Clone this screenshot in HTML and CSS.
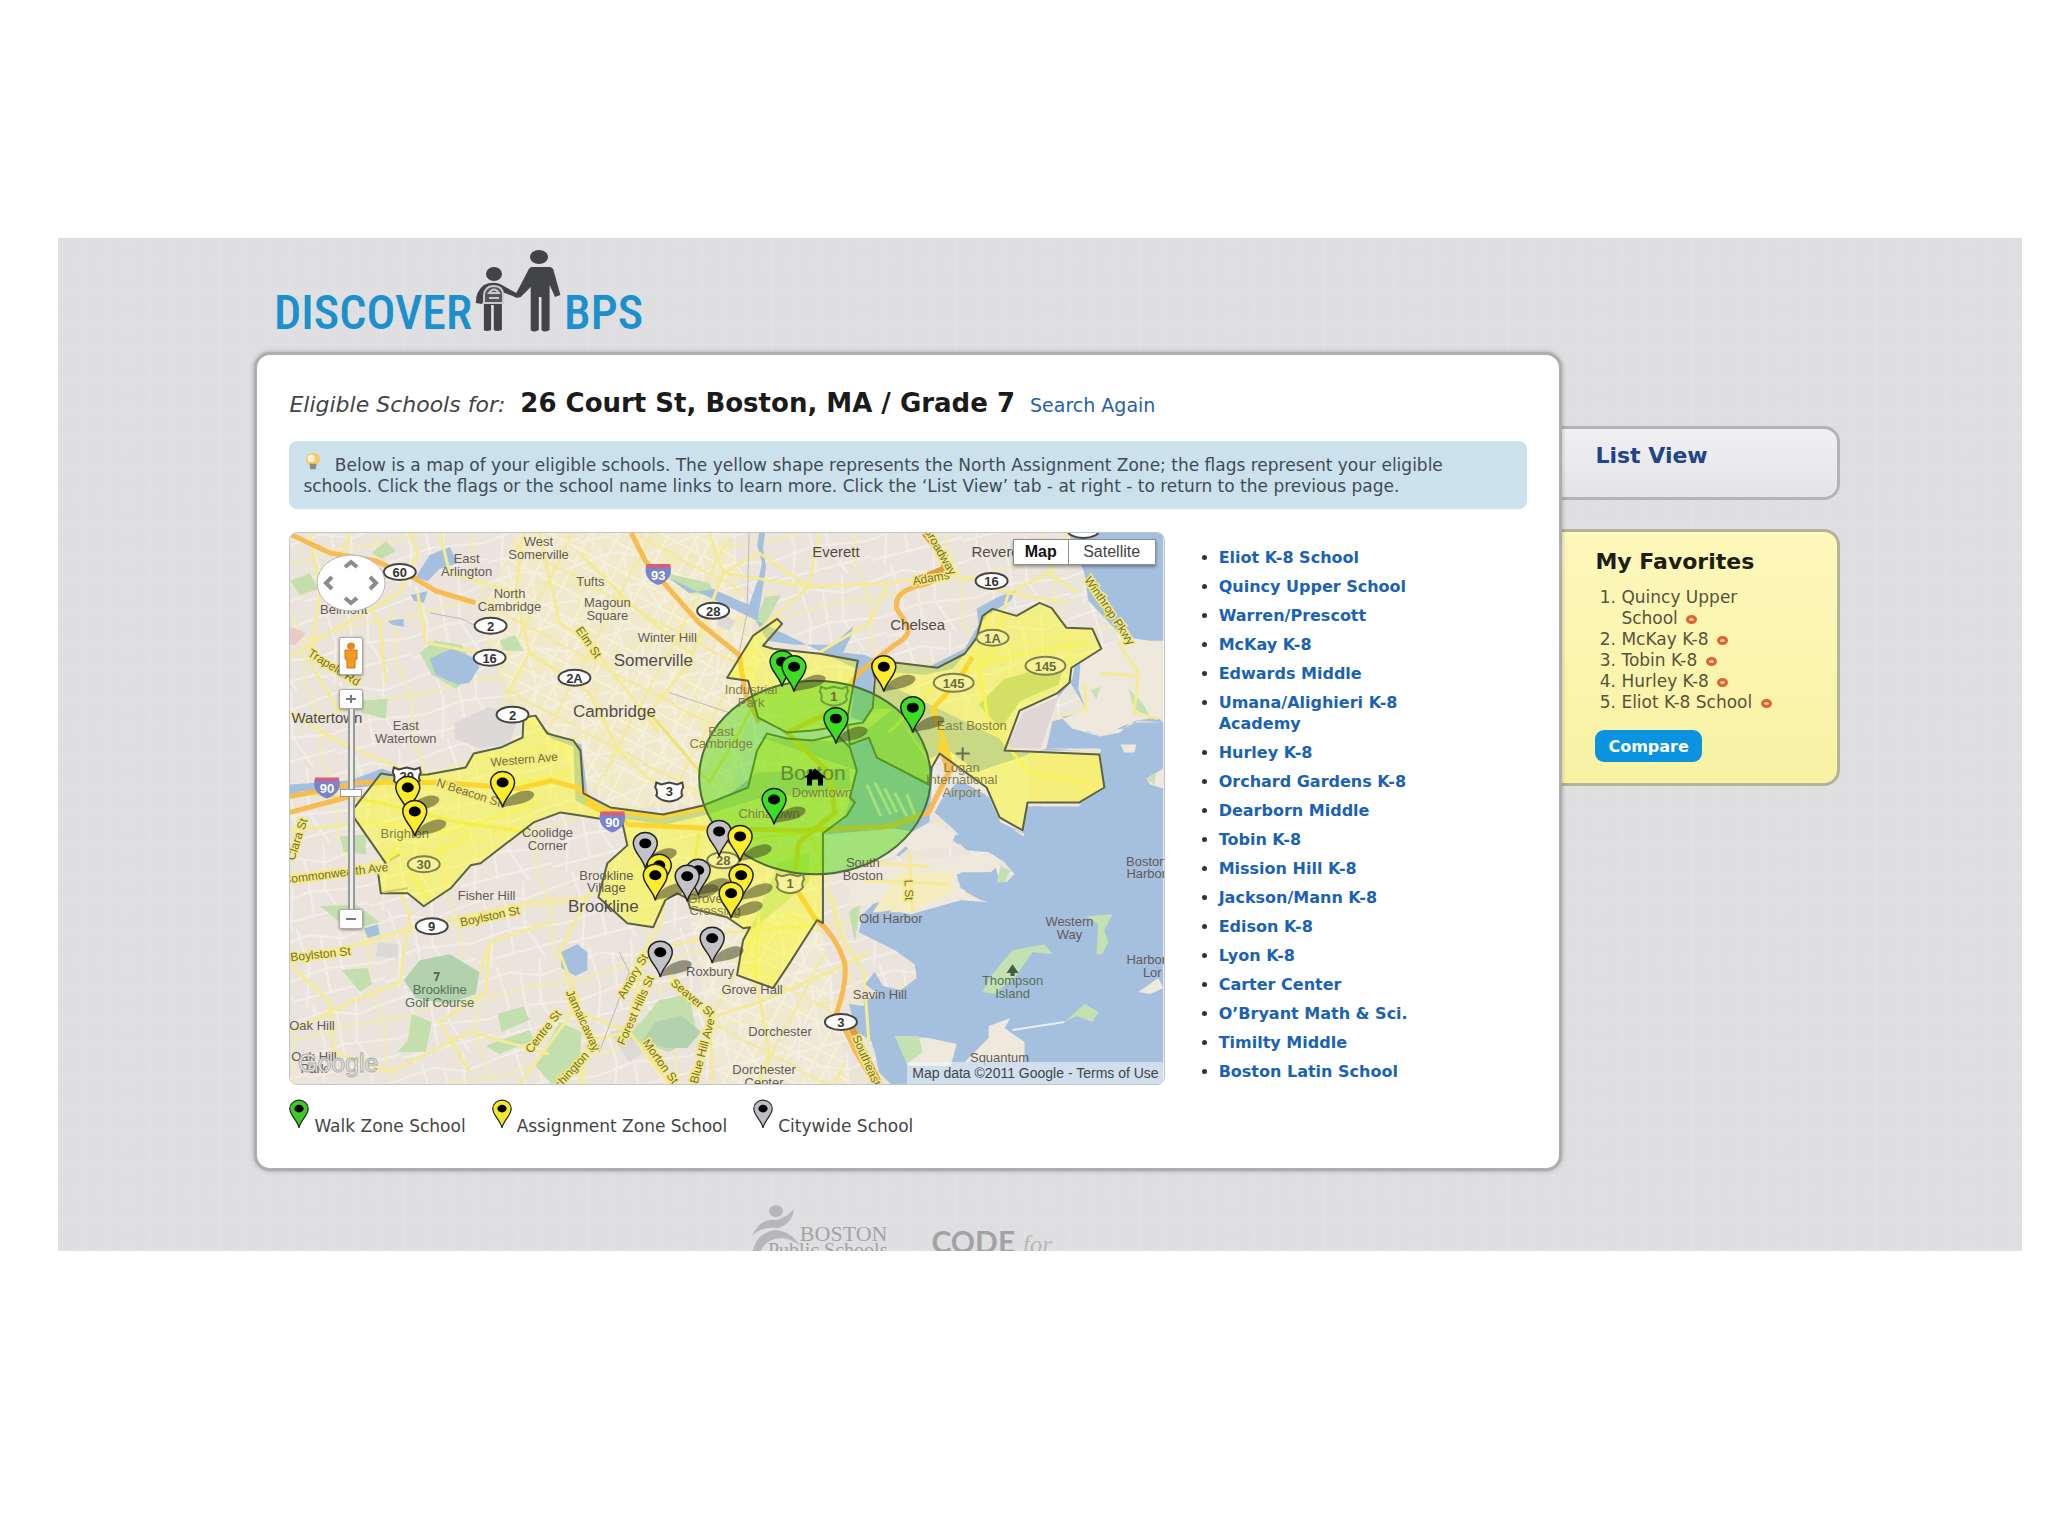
FILE: index.html
```html
<!DOCTYPE html>
<html lang="en">
<head>
<meta charset="utf-8">
<title>Discover BPS</title>
<link rel="stylesheet" href="styles.css">
</head>
<body>
<div class="page">
  <header class="site-header">
    <a class="logo" href="#" aria-label="Discover BPS">
      <span>DISCOVER</span>
      <svg class="logo-people" viewBox="0 0 88 84" aria-hidden="true">
        <g fill="#434447">
          <ellipse cx="20" cy="25" rx="8" ry="7"/>
          <path d="M11 36Q20 32 29 35L47 44L61 20Q62 18 65 18H85L88 20L96 46L90 48L84 36V81Q78 84 75 81V48H72V81Q66 84 63 81V38L52 48Q47 50 43 47L31 43V81Q25 83 22 81V56H19V81Q13 83 11 81V50L9 55L2 54Q2 42 11 36Z" transform="scale(.9 1)"/>
          <ellipse cx="65" cy="8" rx="9" ry="7"/>
        </g>
        <path d="M10 54V46Q11 37 20 37T29 46V54ZM15 49H25M15 44Q20 37 25 44Z" fill="#55565a" stroke="#c9c9cb" stroke-width="2"/>
      </svg>
      <span>BPS</span>
    </a>
  </header>

  <div class="columns">
    <main class="card">
      <div class="title-row">
        <em>Eligible Schools for:</em>
        <h1>26 Court St, Boston, MA / Grade 7</h1>
        <a href="#">Search Again</a>
      </div>
      <p class="tip"><svg class="bulb" viewBox="0 0 18 20" aria-hidden="true"><ellipse cx="9" cy="7" rx="8" ry="7" fill="#f6c969"/><ellipse cx="7" cy="6" rx="4" ry="4" fill="#fff2cf"/><path d="M5 12H13L12 18H6Z" fill="#8f8a80"/></svg> Below is a map of your eligible schools. The yellow shape represents the North Assignment Zone; the flags represent your eligible schools. Click the flags or the school name links to learn more. Click the ‘List View’ tab - at right - to return to the previous page.</p>

      <div class="content">
        <section class="map-column">
          <div class="map">
            <svg class="map-canvas" viewBox="0 0 875 552" role="img" aria-label="Map of eligible schools">
              <defs>
                <pattern id="streets" width="94" height="78" patternUnits="userSpaceOnUse" patternTransform="rotate(-12)">
                  <path d="M0 12L30 8L60 18L94 12M0 50L40 44L94 50M18 0L22 40L12 78M62 0L54 44L68 78M0 70L94 66M40 10L38 70" fill="none" stroke="#f3efe8" stroke-width="2"/>
                  <path d="M0 30L48 26L94 30M80 0L84 34L76 78" fill="none" stroke="#f3ecac" stroke-width="2"/>
                </pattern>
                <pattern id="streets-dense" width="70" height="66" patternUnits="userSpaceOnUse" patternTransform="rotate(28)">
                  <path d="M0 10H70M0 24H70M0 52H70M12 0V66M26 0V66M56 0V66" fill="none" stroke="#f5f0d8" stroke-width="2"/>
                  <path d="M0 38L70 36M40 0L42 66" fill="none" stroke="#f4ea94" stroke-width="2"/>
                </pattern>
                <g id="pin">
                  <path d="M0 0C-2-10-12-16-12-25A12 11 0 0 1 12-25C12-16 2-10 0 0Z" stroke="#222" stroke-width="1.5"/>
                  <ellipse cx="0" cy="-25" rx="6" ry="5" fill="#000"/>
                </g>
                <path id="shade" d="M0 0C2-9 14-17 25-17C36-16 32-8 22-5C14-2 6-2 0 0Z" fill="#3c3c20" opacity=".5"/>
                <ellipse id="oval" rx="16" ry="8" stroke-width="2"/>
                <path id="us" d="M-13-9L-8-7L0-9L8-7L13-9L14-4Q11 0 13 4Q10 9 0 10Q-10 9-13 4Q-11 0-14-4Z" stroke-width="2"/>
                <g id="interstate"><path d="M-12-9H12Q14-2 11 3Q7 9 0 11Q-7 9-11 3Q-14-2-12-9Z" fill="#7784cf"/><path d="M-12-10H12V-6H-12Z" fill="#d6607a"/></g>
              </defs>
              <rect width="875" height="552" fill="#eae4dc"/>
              <path d="M225 0H440L470 130L440 270L320 275L230 180L190 90Z" fill="#f1e9cb"/>
              <path d="M400 380H530L560 552H430Z" fill="#efe8d5"/>
              <rect width="875" height="552" fill="url(#streets)"/>
              <path d="M225 0H440L470 130L440 270L320 275L230 180L190 90ZM400 380H530L560 552H430Z" fill="url(#streets-dense)"/>

              <g fill="#ddd9d8">
                <path d="M165 190L200 174L228 186L220 212L190 216L165 206ZM320 500L352 490L368 510L340 530ZM88 410L108 412V426L86 424ZM430 80L446 88L440 98L428 92Z"/>
              </g>
              <g fill="#c3dfae">
                <path d="M82 20L96 8L106 18L92 26ZM0 48L20 40L28 56L10 62ZM130 120L145 108L172 112L186 140L166 156L142 142ZM210 108L225 102L234 118L214 118ZM70 168L98 166L96 186L72 180ZM30 374L66 372L90 390L60 398ZM50 304L76 302V322L54 320ZM118 508L122 482L142 490L136 520L108 520ZM52 438L78 436L82 452L70 460ZM208 482L234 474L240 488L212 500ZM196 514L240 498L244 508L210 522ZM246 534L270 490L292 500L290 540L262 552ZM338 506L370 468L400 462L408 504L380 520ZM460 400L490 330L520 320V350ZM560 380L572 370L566 410ZM376 40L420 50L426 62L400 60ZM466 90L476 64L492 62L476 92Z"/>
                <path d="M114 448L130 428L160 422L190 440L186 462L158 472L126 466Z" fill="#b2d1ad"/>
                <path d="M354 508L366 490L392 484L412 500L398 516L376 516Z" fill="#b2d1ad"/>
              </g>
              <path d="M0 94L16 100L6 112L0 112Z" fill="#ecc9c9"/>

              <g fill="#a5bfde">
                <path d="M126 44L140 22L160 14L168 30L150 36L138 48ZM121 62L138 58L134 70L124 68ZM98 88L114 86V94L102 92ZM140 126L162 116L182 124L190 134L180 150L168 152L146 142ZM74 396L88 392L90 402L78 406ZM271 420L288 412L298 420V438L286 444L272 436Z"/>
                <path d="M0 252L60 248L92 236L108 242L96 252L60 256L0 262ZM250 194L268 204L292 212L298 262L322 276L372 284L414 274L440 262L468 240L560 236L562 256L470 266L418 282L376 292L318 284L286 268L284 214L262 206Z"/>
                <path d="M378 44L400 60L424 56L450 68L460 72L470 44L473 30L468 12L470 0H476L474 16L477 34L472 66L468 90L478 108L506 112L544 112L564 94L562 104L554 120L575 122L590 128L640 134L676 116L690 92L688 76L706 66L728 56L722 68L706 78L694 88L686 110L664 136L636 142L586 138L586 176L604 176L640 226L660 218L690 240L700 268L712 292L738 302L756 268L794 272L820 256L816 220L760 216L750 208L768 160L784 146L786 134L812 118L826 116L838 108L800 68L796 40L780 0H875V108H846L834 106L852 170L875 190L842 190L832 200L812 204L784 196L774 184L800 180L782 150L770 164L755 180L746 216H812L818 256L790 274H742L735 304L710 288L692 252L668 250L652 268L646 280L664 296L670 302L620 312H672L678 318L700 320L716 330L726 342L718 350L710 346L704 324L680 330L668 346L678 360L696 370L670 362L640 374L622 382L602 378L588 368L574 382L570 400L586 408L606 418L626 432L628 446L612 458L594 454L586 440L576 452L590 462L574 474L560 472L568 500L584 510L590 540L602 552H875V190L850 188L836 196L800 200L786 190L774 186L760 190L740 220Z"/>
                <path d="M568 130L584 134V176L576 190L562 184Z"/>
                <path d="M470 204L562 210L604 176L644 236L640 300L610 324L570 308L536 302L556 286L568 238Z"/>
                <path d="M575 470H620L680 500L640 552H608L584 515Z"/>
              </g>
              <path d="M566 268L590 240L644 236L636 298L604 326L540 340L548 300Z" fill="#a5bfde"/>
              <path d="M536 302L604 296L632 300L604 326L540 340Z" fill="#eee9dd"/>
              <path d="M578 252L592 284M586 250L602 282M596 256L608 280M606 260L618 284M618 262L626 282" fill="none" stroke="#eee9dd" stroke-width="3"/>
              <g fill="#eee9dc">
                <path d="M792 130L834 104L875 110V184L848 188L816 202L784 196L774 186L798 178L790 156Z"/>
                <path d="M832 212L848 212L846 220H836ZM858 246L875 236V256L862 252ZM850 460L870 446L875 456L862 462ZM700 494L722 486L716 496L736 510V530H676L700 506ZM606 504L640 506L668 512L662 534H620Z"/>
                <path d="M668 246L700 264L712 290L734 300L738 274L790 272L816 256L812 222L716 218L740 178L770 160L758 216Z"/>
                <path d="M612 306L640 290L668 300L664 308L672 314L620 318ZM560 332L704 322L714 330L702 340L668 340L672 362L700 370L672 368L622 382L590 370L560 376Z"/>
              </g>
              <path d="M770 164L752 216H718L734 180Z" fill="#e0d6d6"/>
              <path d="M740 218H811L816 255L791 270H742Z" fill="#eee4cc"/>
              <path d="M584 380L610 340L664 340L664 360L622 380Z" fill="#f5ecc0"/>
              <path d="M668 342L702 340L708 356L694 366L672 356Z" fill="#a5bfde"/>
              <g fill="#c3e1b2">
                <path d="M702 444L724 418L756 412L764 422L744 420L726 446L706 462L694 460ZM798 384L824 382L816 398L820 410L814 422H808L810 392ZM776 490L796 472L810 480L804 490L788 484ZM606 504L630 504L634 520L618 532ZM712 334L722 338L716 350H708ZM840 156L854 170L864 188L846 176ZM858 246L868 240L866 252ZM802 158L812 154L808 166Z"/>
              </g>
              <path d="M690 172L716 146L776 130L770 152L732 168L712 196Z" fill="#b4cda6"/>
              <path d="M724 498L776 490" stroke="#e8f0f5" stroke-width="2"/>
              <path d="M576 388L590 380L602 378L600 392L586 402ZM574 470L590 462V474Z" fill="#a5bfde"/>

              <g fill="none" stroke="#f4eb94" stroke-width="3">
                <path d="M0 124L60 88L110 60L128 20L120 0M128 60L136 110L190 120M0 180L50 210L120 240L180 262M150 0L160 40L226 60L234 0M226 60L240 120L218 160L232 190M240 120L300 160L330 220L380 264M250 0L270 90L300 110L370 200M290 20L340 70L400 120M420 0L434 40L400 130L360 180M434 40L520 54L600 50L662 40M434 40L470 20L520 54L462 104M520 54L530 0M600 50L580 90L530 120M662 40L720 60L780 70M720 60L700 130L650 150L600 200M780 0L760 40L720 60M760 40L790 60M0 298L80 290L160 300L250 270M0 343L70 336L110 320M0 430L40 420L120 396L240 370L300 366M0 432L40 470L44 520L100 540L180 500L260 522M0 500L60 470L110 450L120 380L110 360M190 440L200 410L260 390M200 410L196 460L150 490L180 540M300 360L270 420L290 470L254 520L230 552M290 480L340 500L370 540L380 552M340 500L354 420L372 390L376 360M354 420L440 400L534 392M340 500L300 508L290 552M378 440L420 486L424 552M420 486L470 470L540 440L580 420M470 380L466 440L480 520L470 552M540 360L550 400L575 440L580 510M620 318L624 380M574 330L640 334M574 348L660 352M830 110L850 140L846 180L870 186M796 150L798 180M812 140L850 144M20 0L30 60L20 130L50 180M60 0L50 30L90 90L96 150"/>
                <path d="M10 260L90 270L170 290L240 300M360 180L420 250L450 200L470 160M410 300L400 360M430 310L520 300L534 330L500 350" stroke="#efe46e"/>
                <path d="M180 300L120 340L140 370M100 250L130 280L96 330M200 240L240 250L280 240M700 80L690 130L740 120L800 110M690 130L700 190L740 240L800 250"/>
              </g>
              <path d="M140 80L172 86L200 100M460 0L458 80L450 120M380 160L440 180L460 160M310 520L340 440L330 420" fill="none" stroke="#bcb8b8" stroke-width="1"/>
              <g fill="none" stroke="#f8bb52" stroke-width="5">
                <path d="M2 2L40 20L86 28L126 46L146 58L186 70"/>
                <path d="M342 0L356 28L378 54L410 90L450 122L456 160L470 190"/>
                <path d="M0 264L70 250L150 250L230 256L262 248L290 256L310 276L370 284L420 274"/>
                <path d="M0 280L60 264M296 270L340 292L420 296L510 298L600 294L640 280L660 240L650 210"/>
                <path d="M640 0Q650 16 658 30Q656 46 634 52Q604 58 608 76L618 92Q624 102 606 112L570 140L540 180L498 200L540 240L546 280L510 310L504 352L526 386Q548 404 556 432Q558 452 548 480L566 518L586 552"/>
                <path d="M684 124L668 150L644 176L656 210L664 240"/>
              </g>
              <path d="M636 0L656 24L656 36L626 48M560 490L590 552" fill="none" stroke="#e49a3d" stroke-width="7"/>

              <g fill="#ffff00" fill-opacity=".4" stroke="#5d6246" stroke-width="2" stroke-linejoin="round">
                <path d="M96 331L64 285L64 276L91 241L104 243L138 242L176 235L184 221L211 215L233 205L234 185L246 183L258 201L284 208L291 218L294 261L321 275L374 282L414 273L459 255L468 218L478 201L498 206L524 208L548 202L561 215L568 238L561 265L566 270L558 283L534 301V391L528 388L498 435L484 456L448 443L454 408L461 395L454 396L438 385L401 376L398 366L388 361L376 368L364 395L338 391L309 365L318 331L338 313L333 290L291 283L271 280L244 290L191 331L181 333L161 356L134 374L118 361L91 361L88 338Z"/>
                <path d="M493 91L488 86L464 103L438 145L459 148L469 185L498 200L524 198L574 190L584 175L586 146L583 131L608 130L649 135L676 121L688 105L694 83L704 76L728 83L751 70L763 75L778 95L804 96L813 116L783 135L781 150L768 161L731 178L716 218L811 222L816 255L791 270H739L734 298L711 285L698 255L651 221L643 235L640 252L588 225L580 205L561 212L558 188L569 128L531 121L484 116L474 113Z"/>
              </g>
              <path d="M93 360L118 356M100 328L110 322" stroke="#d0ca70" stroke-width="2"/>
              <ellipse cx="526" cy="245" rx="116" ry="97" fill="#46d800" fill-opacity=".45" stroke="#4c6e3e" stroke-width="2"/>

              <g class="place">
                <text x="249" y="13">West</text><text x="249" y="26">Somerville</text>
                <text x="177" y="30">East</text><text x="177" y="43">Arlington</text>
                <text x="220" y="65">North</text><text x="220" y="78">Cambridge</text>
                <text x="301" y="53">Tufts</text>
                <text x="318" y="74">Magoun</text><text x="318" y="87">Square</text>
                <text x="378" y="109">Winter Hill</text>
                <text x="54" y="81">Belmont</text>
                <text x="116" y="197">East</text><text x="116" y="210">Watertown</text>
                <text x="258" y="305">Coolidge</text><text x="258" y="318">Corner</text>
                <text x="317" y="348">Brookline</text><text x="317" y="360">Village</text>
                <text x="197" y="368">Fisher Hill</text>
                <text x="574" y="335">South</text><text x="574" y="348">Boston</text>
                <text x="602" y="391">Old Harbor</text>
                <text x="781" y="394">Western</text><text x="781" y="407">Way</text>
                <text x="858" y="334">Boston</text><text x="858" y="346">Harbor</text>
                <text x="858" y="432">Harbor</text><text x="864" y="445">Lor</text>
                <text x="421" y="444">Roxbury</text>
                <text x="463" y="462">Grove Hall</text>
                <text x="591" y="467">Savin Hill</text>
                <text x="491" y="504">Dorchester</text>
                <text x="475" y="542">Dorchester</text><text x="475" y="555">Center</text>
                <text x="22" y="498">Oak Hill</text>
                <text x="24" y="529">Oak Hill</text><text x="24" y="541">Park</text>
                <text x="711" y="530">Squantum</text>
                <g class="park"><text x="150" y="462">Brookline</text><text x="150" y="475">Golf Course</text><text x="724" y="453">Thompson</text><text x="724" y="466">Island</text></g>
                <g class="zone"><text x="462" y="161">Industrial</text><text x="462" y="174">Park</text><text x="432" y="203">East</text><text x="432" y="215">Cambridge</text><text x="683" y="197">East Boston</text><text x="673" y="239">Logan</text><text x="673" y="252">International</text><text x="673" y="265">Airport</text><text x="480" y="286">Chinatown</text><text x="533" y="265">Downtown</text><text x="115" y="306">Brighton</text><text x="416" y="371">Grove</text><text x="426" y="383">Crossing</text></g>
              </g>
              <g class="town">
                <text x="547" y="24">Everett</text><text x="707" y="24">Revere</text><text x="629" y="97">Chelsea</text><text x="37" y="190">Watertown</text>
                <g class="city"><text x="364" y="133">Somerville</text><text x="325" y="184">Cambridge</text><text x="314" y="380">Brookline</text></g>
                <text class="boston" x="524" y="247">Boston</text>
              </g>
              <path d="M724 432L730 441H726V444H722V441H718Z" fill="#445b46"/>
              <path d="M667 221H681M674 215V228M144 441H149L146 449" fill="none" stroke="#666a50" stroke-width="2"/>

              <g class="road">
                <text transform="translate(42 138) rotate(32)">Trapelo Rd</text>
                <text transform="translate(296 112) rotate(55)">Elm St</text>
                <text transform="translate(235 231) rotate(-5)">Western Ave</text>
                <text transform="translate(178 264) rotate(18)">N Beacon St</text>
                <text transform="translate(46 345) rotate(-7)">Commonwealth Ave</text>
                <text transform="translate(31 426) rotate(-6)">Boylston St</text>
                <text transform="translate(201 388) rotate(-12)">Boylston St</text>
                <text transform="translate(257 502) rotate(-52)">Centre St</text>
                <text transform="translate(284 542) rotate(-48)">Washington St</text>
                <text transform="translate(290 490) rotate(65)">Jamaicaway</text>
                <text transform="translate(347 446) rotate(-60)">Amory St</text>
                <text transform="translate(350 480) rotate(-66)">Forest Hills St</text>
                <text transform="translate(401 469) rotate(40)">Seaver St</text>
                <text transform="translate(368 532) rotate(54)">Morton St</text>
                <text transform="translate(417 520) rotate(-75)">Blue Hill Ave</text>
                <text transform="translate(616 358) rotate(88)">L St</text>
                <text transform="translate(818 80) rotate(56)">Winthrop Pkwy</text>
                <text transform="translate(643 49) rotate(-10)">Adams</text>
                <text transform="translate(648 20) rotate(60)">Broadway</text>
                <text transform="translate(574 530) rotate(66)">Southeast</text>
                <text transform="translate(11 308) rotate(-72)">Clara St</text>
              </g>

              <g fill="#fff" stroke="#444">
                <use href="#oval" x="110" y="39"/><use href="#oval" x="201" y="93"/><use href="#oval" x="200" y="125"/><use href="#oval" x="285" y="145"/><use href="#oval" x="223" y="182"/><use href="#oval" x="424" y="78"/><use href="#oval" x="703" y="48"/><use href="#oval" x="142" y="394"/><use href="#oval" x="552" y="490"/><use href="#oval" x="795" y="-3"/><use href="#us" x="380" y="259"/><use href="#us" x="117" y="244"/>
                <g fill="#f6f29a" stroke="#80804c"><use href="#oval" x="704" y="105"/><ellipse cx="757" cy="133" rx="20" ry="9" stroke-width="2"/><ellipse cx="665" cy="150" rx="20" ry="9" stroke-width="2"/><use href="#oval" x="134" y="332"/><use href="#oval" x="434" y="328"/><use href="#us" x="501" y="351"/></g>
                <use href="#us" x="545" y="163" fill="#a5e24d" stroke="#6aa33b"/>
              </g>
              <use href="#interstate" x="369" y="41"/><use href="#interstate" x="37" y="255"/><use href="#interstate" x="323" y="289"/>
              <g class="shield-text">
                <text x="110" y="44">60</text><text x="201" y="98">2</text><text x="200" y="130">16</text><text x="285" y="150">2A</text><text x="223" y="187">2</text><text x="424" y="83">28</text><text x="703" y="53">16</text><text x="142" y="399">9</text><text x="552" y="495">3</text><text x="380" y="264">3</text><text x="117" y="249">20</text>
                <g fill="#6b6b3c"><text x="704" y="110">1A</text><text x="757" y="138">145</text><text x="665" y="155">145</text><text x="134" y="337">30</text><text x="434" y="333">28</text><text x="501" y="356">1</text><text x="545" y="168">1</text></g>
                <g fill="#fff"><text x="369" y="47">93</text><text x="37" y="261">90</text><text x="323" y="295">90</text></g>
              </g>

              <path d="M526 236L537 245H534V253H529V247H523V253H518V245H515L520 241V237H523V239Z" fill="#000"/>

              <g><use href="#shade" x="505" y="159"/><use href="#shade" x="547" y="211"/><use href="#shade" x="595" y="159"/><use href="#shade" x="624" y="200"/><use href="#shade" x="485" y="291"/><use href="#shade" x="213" y="275"/><use href="#shade" x="118" y="280"/><use href="#shade" x="125" y="304"/><use href="#shade" x="356" y="333"/><use href="#shade" x="451" y="329"/><use href="#shade" x="366" y="368"/><use href="#shade" x="409" y="363"/><use href="#shade" x="398" y="369"/><use href="#shade" x="452" y="368"/><use href="#shade" x="442" y="386"/><use href="#shade" x="423" y="431"/><use href="#shade" x="371" y="445"/></g>
              <g fill="#3fdc26"><use href="#pin" x="493" y="154"/><use href="#pin" x="505" y="159"/><use href="#pin" x="547" y="211"/><use href="#pin" x="624" y="200"/><use href="#pin" x="485" y="292"/></g>
              <g fill="#fbec2c"><use href="#pin" x="595" y="159"/><use href="#pin" x="213" y="275"/><use href="#pin" x="118" y="280"/><use href="#pin" x="125" y="304"/></g>
              <g fill="#c3c3c7"><use href="#pin" x="356" y="336"/><use href="#pin" x="430" y="324"/></g>
              <g fill="#fbec2c"><use href="#pin" x="451" y="329"/><use href="#pin" x="370" y="358"/><use href="#pin" x="366" y="368"/></g>
              <g fill="#c3c3c7"><use href="#pin" x="409" y="363"/><use href="#pin" x="398" y="369"/></g>
              <g fill="#fbec2c"><use href="#pin" x="452" y="368"/><use href="#pin" x="442" y="386"/></g>
              <g fill="#c3c3c7"><use href="#pin" x="423" y="431"/><use href="#pin" x="371" y="445"/></g>
              <text class="google" x="8" y="540">Google</text>
            </svg>
            <div class="map-controls">
              <svg class="pan" viewBox="0 0 70 58" aria-hidden="true"><ellipse cx="35" cy="29" rx="34" ry="28" fill="#fefefe" stroke="#b5b5b5"/><path d="M29 13L35 8L41 13M29 44L35 49L41 44M16 23L10 29L16 35M54 23L60 29L54 35" fill="none" stroke="#8b8b8b" stroke-width="4"/></svg>
              <button class="pegman" aria-label="Street view"><svg viewBox="0 0 16 28" aria-hidden="true"><ellipse cx="8" cy="4" rx="4" ry="3.500" fill="#e8871e"/><path d="M2 8H14V17L12 18V26H4V18L2 17Z" fill="#f49a22" stroke="#c9731a"/></svg></button>
              <button class="zoom-in" aria-label="Zoom in"><svg viewBox="0 0 12 12" aria-hidden="true"><path d="M1 6H11M6 2V10" stroke="#777" stroke-width="2"/></svg></button>
              <div class="track"><span class="handle"></span></div>
              <button class="zoom-out" aria-label="Zoom out"><svg viewBox="0 0 12 12" aria-hidden="true"><path d="M1 6H11" stroke="#777" stroke-width="2"/></svg></button>
            </div>
            <div class="map-type"><button class="active">Map</button><button>Satellite</button></div>
            <div class="attribution">Map data ©2011 Google - <a href="#">Terms of Use</a></div>
          </div>
          <ul class="legend">
            <li><svg viewBox="-13 -37 26 38" aria-hidden="true"><use href="#pin" fill="#3fc926"/></svg>Walk Zone School</li>
            <li><svg viewBox="-13 -37 26 38" aria-hidden="true"><use href="#pin" fill="#f5e62e"/></svg>Assignment Zone School</li>
            <li><svg viewBox="-13 -37 26 38" aria-hidden="true"><use href="#pin" fill="#bdbdc1"/></svg>Citywide School</li>
          </ul>
        </section>

        <ul class="schools">
          <li><a href="#">Eliot K-8 School</a></li>
          <li><a href="#">Quincy Upper School</a></li>
          <li><a href="#">Warren/Prescott</a></li>
          <li><a href="#">McKay K-8</a></li>
          <li><a href="#">Edwards Middle</a></li>
          <li><a href="#">Umana/Alighieri K-8 Academy</a></li>
          <li><a href="#">Hurley K-8</a></li>
          <li><a href="#">Orchard Gardens K-8</a></li>
          <li><a href="#">Dearborn Middle</a></li>
          <li><a href="#">Tobin K-8</a></li>
          <li><a href="#">Mission Hill K-8</a></li>
          <li><a href="#">Jackson/Mann K-8</a></li>
          <li><a href="#">Edison K-8</a></li>
          <li><a href="#">Lyon K-8</a></li>
          <li><a href="#">Carter Center</a></li>
          <li><a href="#">O’Bryant Math &amp; Sci.</a></li>
          <li><a href="#">Timilty Middle</a></li>
          <li><a href="#">Boston Latin School</a></li>
        </ul>
      </div>
    </main>

    <aside class="sidebar">
      <a class="tab" href="#">List View</a>
      <section class="favorites">
        <h2>My Favorites</h2>
        <ol>
          <li>Quincy Upper School&nbsp;<button class="remove" aria-label="Remove Quincy Upper School"></button></li>
          <li>McKay K-8&nbsp;<button class="remove" aria-label="Remove McKay K-8"></button></li>
          <li>Tobin K-8&nbsp;<button class="remove" aria-label="Remove Tobin K-8"></button></li>
          <li>Hurley K-8&nbsp;<button class="remove" aria-label="Remove Hurley K-8"></button></li>
          <li>Eliot K-8 School&nbsp;<button class="remove" aria-label="Remove Eliot K-8 School"></button></li>
        </ol>
        <button class="compare">Compare</button>
      </section>
    </aside>
  </div>

  <footer class="site-footer">
    <a class="bps" href="#">
      <svg viewBox="0 0 50 50" aria-hidden="true"><g fill="#b7b7b9"><ellipse cx="24" cy="7" rx="7" ry="6"/><path d="M0 32Q8 14 24 16Q34 14 42 5Q40 20 26 24Q10 22 0 32ZM0 50Q4 28 24 26Q40 28 48 42Q34 30 20 36Q10 40 8 50Z"/></g></svg>
      <span><span class="boston-name">BOSTON</span><br>Public Schools</span>
    </a>
    <a class="code" href="#"><b>CODE</b> <i>for</i></a>
  </footer>
</div>
</body>
</html>
```
FILE: styles.css
```css
* { box-sizing: border-box; }

body {
  margin: 0;
  background: #fff;
  color: #444;
  font: 16px/21px "DejaVu Sans", Verdana, sans-serif;
}

a { color: #2862a8; text-decoration: none; }
ul, ol { margin: 0; padding: 0; }
button { font: inherit; cursor: pointer; }

.page {
  margin: 238px 26px 0 58px;
  background-color: #dfdfe1;
  background-image:
    repeating-linear-gradient(90deg, rgba(255,255,255,.05) 0 2px, transparent 2px 9px, rgba(120,120,130,.01) 9px 11px, transparent 11px 23px),
    repeating-linear-gradient(0deg, rgba(255,255,255,.05) 0 2px, transparent 2px 11px, rgba(120,120,130,.01) 11px 13px, transparent 13px 29px);
}

.site-header { height: 114px; padding: 11px 0 0 11%; }
.logo {
  display: inline-flex;
  align-items: flex-end;
  color: #1c8fcd;
  font: 500 48px/40px "Roboto Condensed", "Liberation Sans Narrow", "Liberation Sans", sans-serif;
}
.logo-people { width: 92px; height: 84px; overflow: visible; }

.columns { display: flex; align-items: flex-start; padding-left: 10%; }

.card {
  position: relative;
  z-index: 1;
  flex: 0 0 74%;
  padding: 32px 32px 30px;
  border: 3px solid #adadaf;
  border-radius: 16px;
  background: #fff;
  box-shadow: 0 0 5px rgba(0,0,0,.25);
}

.title-row { display: flex; align-items: baseline; gap: 15px; padding-bottom: 20px; line-height: 32px; }
.title-row em { font-size: 22px; }
.title-row h1 { margin: 0; color: #1b1b1b; font-size: 26px; line-height: 32px; }
.title-row a { font-size: 19px; }

.tip {
  margin: 0 0 23px;
  padding: 12px 40px 12px 14px;
  border-radius: 8px;
  background: #cbe2ed;
  color: #3f4b54;
  font-size: 17px;
}
.bulb { width: 20px; height: 18px; margin-right: 6px; }

.content { display: flex; gap: 32px; }
.map-column { flex: 0 0 70.7%; min-width: 0; }
.map { position: relative; overflow: hidden; border: 1px solid #c4c4c4; border-radius: 8px; }
.map-canvas { display: block; width: 100%; }
.map-canvas text { font-family: "Liberation Sans", Arial, sans-serif; text-anchor: middle; }
.place { font-size: 13px; fill: #625b58; }
.park { fill: #567059; }
.zone { fill: #827e49; }
.town { font-size: 15px; fill: #514c4a; }
.city { font-size: 17px; }
.boston { font-size: 21px; fill: #628a38; }
.road { font-size: 12px; fill: #77702f; stroke: #f3ea83; stroke-width: 3px; paint-order: stroke; }
.shield-text { font-size: 13px; font-weight: bold; fill: #333; }
.map-canvas .google { font-size: 25px; fill: #f4f2f0; stroke: #aaa; stroke-width: 1px; text-anchor: start; }

.map-controls { position: absolute; top: 21px; left: 26px; width: 70px; display: flex; flex-direction: column; align-items: center; }
.map-controls button {
  display: flex;
  align-items: center;
  justify-content: center;
  width: 24px;
  padding: 0;
  border: 1px solid #aaa;
  border-radius: 2px;
  background: #fdfdfd;
  box-shadow: 0 1px 3px rgba(0,0,0,.4);
}
.pan { width: 70px; height: 58px; }
.pegman { height: 38px; margin: 25px 0 14px; }
.pegman svg { width: 16px; height: 28px; }
.zoom-in, .zoom-out { height: 20px; }
.zoom-in svg, .zoom-out svg { width: 12px; height: 12px; }
.track { display: flex; align-items: center; justify-content: center; width: 7px; height: 200px; border: solid #999; border-width: 0 2px; background: #eee; }
.handle { flex: none; width: 22px; height: 8px; margin-bottom: 32px; border: 1px solid #999; background: #fff; }

.map-type { position: absolute; top: 6px; right: 8px; display: flex; border: 1px solid #8a8f9c; box-shadow: 0 2px 3px rgba(0,0,0,.35); }
.map-type button { width: 86px; height: 24px; padding: 0; border: 0; background: #fff; color: #444; font: 16px/24px "Liberation Sans", Arial, sans-serif; }
.map-type .active { width: 55px; border-right: 1px solid #8a8f9c; color: #111; font-weight: bold; }

.attribution { position: absolute; right: 0; bottom: 0; padding: 0 5px; background: rgba(245,248,252,.55); font: 14px/22px "Liberation Sans", Arial, sans-serif; }
.attribution a { color: inherit; }

.legend { display: flex; gap: 26px; padding-top: 14px; list-style: none; font-size: 17px; }
.legend li { display: flex; gap: 5px; line-height: 24px; align-items: flex-end; }
.legend svg { width: 20px; height: 30px; margin-bottom: 9px; }

.schools { flex: 1; padding: 15px 70px 0 22px; color: #333; }
.schools li { margin-bottom: 8px; }
.schools a { color: #1b62b3; font-weight: bold; }

.sidebar { flex: 0 0 15.7%; padding-top: 74px; }
.tab, .favorites { display: block; margin-left: -4px; border: 3px solid #b3b3b6; border-radius: 0 16px 16px 0; }
.tab { height: 74px; padding: 14px 34px; background: linear-gradient(#f0f0f2, #e4e4e7); color: #1e4489; font-size: 22px; font-weight: bold; line-height: 26px; }
.favorites { margin-top: 29px; padding: 17px 34px 21px; border-color: #b5b296; background: linear-gradient(#fdf8bb, #f8f2a4); }
.favorites h2 { margin: 0 0 12px; color: #1d1d12; font-size: 22px; line-height: 26px; white-space: nowrap; }
.favorites ol { padding-left: 26px; color: #57533c; font-size: 17px; }
.remove { width: 11px; height: 9px; margin-left: 3px; padding: 0; border: 3px solid #dd6431; border-radius: 50%; background: #f6d0a0; vertical-align: middle; }
.compare { display: block; height: 32px; margin-top: 17px; padding: 0 13px; border: 0; border-radius: 9px; background: #0b93e0; color: #fff; font-size: 16px; font-weight: bold; }

.site-footer { display: flex; gap: 44px; height: 80px; padding: 33px 0 0 694px; overflow: hidden; color: #a3a3a5; }
.site-footer a { color: inherit; white-space: nowrap; }
.bps { display: flex; font: 20px/16px "Liberation Serif", serif; }
.bps svg { width: 50px; height: 50px; margin-right: -34px; }
.bps > span { padding-top: 22px; text-align: right; }
.boston-name { font-size: 22px; }
.code { padding-top: 25px; font: 30px/24px Lato, sans-serif; }
.code i { color: #b7b7b9; font: italic 25px/24px "Liberation Serif", serif; }
```
